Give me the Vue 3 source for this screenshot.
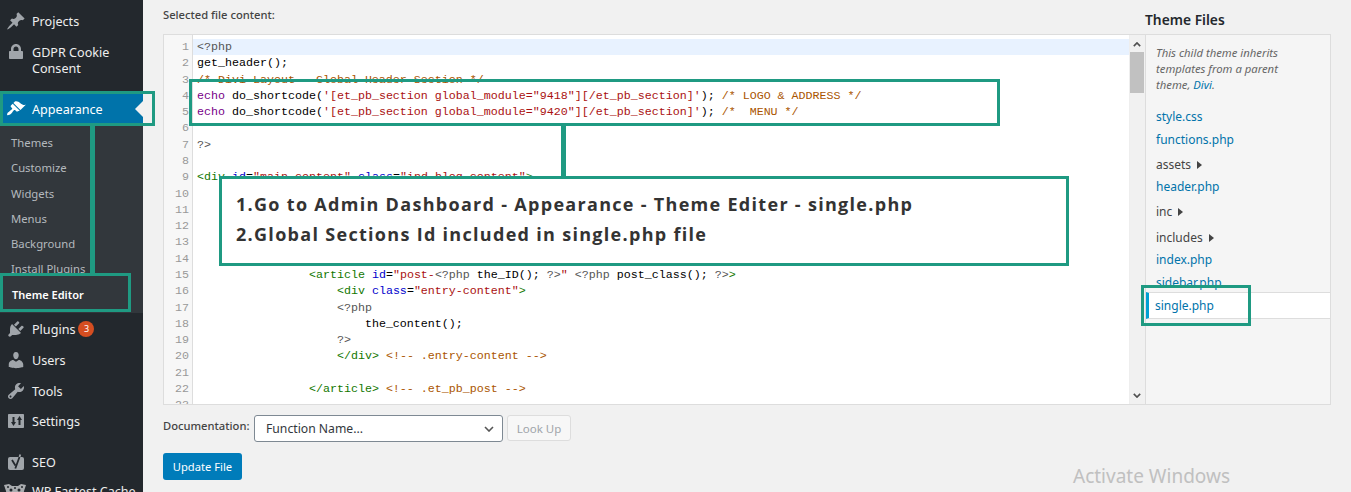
<script setup>
const icons = {
  pin: 'M10.44 3.02l1.82-1.82 6.36 6.35-1.83 1.82c-1.05-.68-2.48-.57-3.41.36l-.75.75c-.92.93-1.04 2.35-.35 3.41l-1.83 1.82-2.41-2.41-2.8 2.79c-.42.42-3.38 2.71-3.8 2.29s1.86-3.39 2.28-3.81l2.79-2.79L4.1 9.36l1.83-1.82c1.05.69 2.48.57 3.4-.36l.75-.75c.93-.92 1.05-2.35.36-3.41z',
  lock: 'M15 9h1c.55 0 1 .45 1 1v6c0 .55-.45 1-1 1H4c-.55 0-1-.45-1-1v-6c0-.55.45-1 1-1h1V7c0-2.76 2.24-5 5-5s5 2.24 5 5v2zm-2.5 0V7c0-1.38-1.12-2.5-2.5-2.5S7.500 5.620 7.500 7v2h5z',
  brush: 'M14.48 11.06L7.41 3.99l1.5-1.5c.5-.56 2.3-.47 3.51.32 1.21.8 1.43 1.28 2.91 2.1 1.18.64 2.45 1.26 4.45.85zm-.71.71L6.7 4.7 4.93 6.47c-.39.39-.39 1.02 0 1.41l1.06 1.06c.39.39.39 1.03 0 1.42-.6.6-1.43 1.11-2.21 1.69-.35.26-.7.53-1.01.84C1.43 13.23.69 15.44 1.24 16s2.77-.19 4.08-1.5c.31-.31.58-.66.84-1.01.58-.78 1.09-1.61 1.69-2.21.39-.39 1.02-.39 1.41 0l1.06 1.06c.39.39 1.02.39 1.41 0z',
  plug: 'M13.11 4.36L9.87 7.6 8 5.73l3.24-3.24c.35-.34 1.05-.2 1.56.32.52.51.66 1.21.31 1.55zm-8 1.77l.91-1.12 9.01 9.01-1.19.84c-.71.71-2.63 1.16-3.82 1.16H6.14L4.9 17.26c-.59.59-1.54.59-2.12 0-.59-.58-.59-1.53 0-2.12l1.24-1.24v-3.88c0-1.13.4-3.19 1.09-3.89zm7.26 3.97l3.24-3.24c.34-.35 1.04-.21 1.55.31.52.51.66 1.21.31 1.55l-3.24 3.25z',
  user: 'M10 9.25c-2.27 0-2.73-3.44-2.73-3.44C7 4.02 7.82 2 9.97 2c2.16 0 2.98 2.02 2.71 3.81 0 0-.41 3.44-2.68 3.44zm0 2.57L12.72 10c2.39 0 4.52 2.33 4.52 4.53v2.49s-3.65 1.13-7.24 1.13c-3.65 0-7.24-1.13-7.24-1.13v-2.49c0-2.25 1.94-4.48 4.47-4.48z',
  tools: 'M16.68 9.77c-1.34 1.34-3.3 1.67-4.95.99l-5.41 6.52c-.99.99-2.59.99-3.58 0s-.99-2.59 0-3.57l6.52-5.42c-.68-1.65-.35-3.61.99-4.95 1.28-1.28 3.12-1.62 4.72-1.06l-2.89 2.89 2.82 2.82 2.86-2.87c.53 1.58.18 3.39-1.08 4.65zM3.81 16.21c.4.39 1.04.39 1.43 0 .4-.4.4-1.04 0-1.43-.39-.4-1.03-.4-1.43 0-.39.39-.39 1.03 0 1.43z',
  settings: 'M3 3h14c.6 0 1 .4 1 1v12c0 .6-.4 1-1 1H3c-.6 0-1-.4-1-1V4c0-.6.4-1 1-1zM6.500 6v5H5l2.500 4L10 11H8.500V6zM12.500 14V9H11l2.500-4L16 9h-1.500v5z'
}

const subItems = ['Themes', 'Customize', 'Widgets', 'Menus', 'Background', 'Install Plugins']

const S = (t, c) => ({ t, c })
const sp = n => S(' '.repeat(n), '')
const code = [
  [S('<?php', 'meta')],
  [S('get_header();', '')],
  [S('/* Divi Layout - Global Header Section */', 'com')],
  [S('echo', 'kw'), S(' do_shortcode(', ''), S(`'[et_pb_section global_module="9418"][/et_pb_section]'`, 'str'), S('); ', ''), S('/* LOGO & ADDRESS */', 'com')],
  [S('echo', 'kw'), S(' do_shortcode(', ''), S(`'[et_pb_section global_module="9420"][/et_pb_section]'`, 'str'), S('); ', ''), S('/*  MENU */', 'com')],
  [],
  [S('?>', 'meta')],
  [],
  [S('<div', 'tag'), S(' '), S('id', 'attr'), S('='), S('"main-content"', 'str'), S(' '), S('class', 'attr'), S('='), S('"ind-blog-content"', 'str'), S('>', 'tag')],
  [],
  [],
  [],
  [],
  [],
  [sp(16), S('<article', 'tag'), S(' '), S('id', 'attr'), S('='), S('"post-', 'str'), S('<?php', 'meta'), S(' the_ID(); '), S('?>', 'meta'), S('"', 'str'), S(' '), S('<?php', 'meta'), S(' post_class(); '), S('?>', 'meta'), S('>', 'tag')],
  [sp(20), S('<div', 'tag'), S(' '), S('class', 'attr'), S('='), S('"entry-content"', 'str'), S('>', 'tag')],
  [sp(20), S('<?php', 'meta')],
  [sp(24), S('the_content();')],
  [sp(20), S('?>', 'meta')],
  [sp(20), S('</div>', 'tag'), S(' '), S('<!-- .entry-content -->', 'com')],
  [],
  [sp(16), S('</article>', 'tag'), S(' '), S('<!-- .et_pb_post -->', 'com')],
  []
]
</script>

<template>
  <div class="page">
    <aside class="sidebar">
      <a class="item first"><svg class="ico" viewBox="0 0 20 20"><path :d="icons.pin" /></svg><span>Projects</span></a>
      <a class="item tall"><svg class="ico" viewBox="0 0 20 20"><path :d="icons.lock" /></svg><span>GDPR Cookie<br />Consent</span></a>
      <a class="item active"><svg class="ico" viewBox="0 0 20 20"><path :d="icons.brush" /></svg><span>Appearance</span><i class="notch"></i></a>
      <div class="submenu">
        <a v-for="s in subItems" :key="s" class="sub">{{ s }}</a>
        <a class="sub current">Theme Editor</a>
      </div>
      <a class="item"><svg class="ico" viewBox="0 0 20 20"><path :d="icons.plug" /></svg><span>Plugins</span><b class="badge">3</b></a>
      <a class="item"><svg class="ico" viewBox="0 0 20 20"><path :d="icons.user" /></svg><span>Users</span></a>
      <a class="item"><svg class="ico" viewBox="0 0 20 20"><path :d="icons.tools" /></svg><span>Tools</span></a>
      <a class="item settings"><svg class="ico" viewBox="0 0 20 20"><path fill-rule="evenodd" :d="icons.settings" /></svg><span>Settings</span></a>
      <a class="item seo">
        <svg class="ico" viewBox="0 0 20 20">
          <rect x="2" y="5" width="16" height="13" rx="2" />
          <path class="y-arm" d="M14.300 2.500l-.8 2.500" />
          <path class="y-glyph" d="M6 8l3.400 5.500M13.500 5l-4.200 11.500" />
        </svg>
        <span>SEO</span>
      </a>
      <a class="item fastest">
        <svg class="cheetah" viewBox="0 0 24 24">
          <path d="M1 3l5-1 3 2h6l3-2 5 1-2 6-1 6-4 6H8l-4-6-1-6z" />
          <circle class="spot" cx="8" cy="8" r="1.500" />
          <circle class="spot" cx="16" cy="8" r="1.500" />
          <circle class="spot" cx="12" cy="6" r="1" />
          <circle class="spot" cx="5" cy="5" r="1" />
          <circle class="spot" cx="19" cy="5" r="1" />
        </svg>
        <span>WP Fastest Cache</span>
      </a>
    </aside>

    <main class="main">
      <div class="columns">
        <section class="editor-col">
          <div class="label">Selected file content:</div>
          <div class="editor">
            <div class="gutter">
              <div v-for="(l, i) in code" :key="i" class="num">{{ i + 1 }}</div>
            </div>
            <div class="code">
              <div v-for="(l, i) in code" :key="i" class="line" :class="{ hl: i === 0 }"><span v-for="(p, j) in l" :key="j" :class="p.c">{{ p.t }}</span></div>
            </div>
            <div class="scroll">
              <svg class="chev" viewBox="0 0 10 6"><path d="M1 5l4-4 4 4" /></svg>
              <div class="thumb"></div>
              <svg class="chev down" viewBox="0 0 10 6"><path d="M1 1l4 4 4-4" /></svg>
            </div>
          </div>
          <div class="doc">
            <span class="doc-label">Documentation:</span>
            <div class="select">
              <span>Function Name...</span>
              <svg viewBox="0 0 10 6"><path d="M1 1l4 4 4-4" /></svg>
            </div>
            <button class="lookup" disabled>Look Up</button>
          </div>
          <button class="update">Update File</button>
        </section>

        <section class="files-col">
          <h2 class="files-title">Theme Files</h2>
          <div class="panel">
            <p class="note">This child theme inherits<br />templates from a parent<br />theme, <a>Divi</a>.</p>
            <ul class="tree">
              <li class="file">style.css</li>
              <li class="file">functions.php</li>
              <li class="folder">assets <i class="tri"></i></li>
              <li class="file">header.php</li>
              <li class="folder">inc <i class="tri"></i></li>
              <li class="folder lower">includes <i class="tri"></i></li>
              <li class="file">index.php</li>
              <li class="file">sidebar.php</li>
              <li class="file selected">single.php</li>
            </ul>
          </div>
        </section>
      </div>
    </main>

    <div class="ann a-code"></div>
    <div class="ann a-link1"></div>
    <div class="ann a-steps">
      <div>1.Go to Admin Dashboard - Appearance - Theme Editer - single.php</div>
      <div>2.Global Sections Id included in single.php file</div>
    </div>
    <div class="ann a-appearance"></div>
    <div class="ann a-link2"></div>
    <div class="ann a-editor"></div>
    <div class="ann a-single"></div>
    <div class="watermark">Activate Windows</div>
  </div>
</template>

<style>
html, body { margin: 0; padding: 0; background: #f1f1f1; }
</style>

<style scoped>
.page {
  position: relative;
  display: flex;
  width: 1351px;
  height: 492px;
  overflow: hidden;
  background: #f1f1f1;
  font-family: "Noto Sans", "Open Sans", sans-serif;
  color: #444;
}
.sidebar {
  width: 143px;
  flex: none;
  background: #23282d;
  display: flex;
  flex-direction: column;
  color: #eee;
  font-size: 12.600px;
}
.item {
  display: flex;
  align-items: center;
  height: 31px;
  flex: none;
  box-sizing: border-box;
  padding-left: 6px;
  line-height: 16px;
  position: relative;
  color: #eee;
}
.item span { padding-top: 2px; }
.item.first { margin-top: 6px; height: 30px; }
.item.tall { height: 46px; align-items: flex-start; padding-top: 7px; margin-top: 1px; margin-bottom: 11px; }
.item.tall span { padding-top: 1px; }
.item.active { background: #0073aa; color: #fff; padding-bottom: 2px; }
.item.settings { margin-top: -1px; }
.item.seo { margin-top: 10px; }
.ico { width: 20px; height: 20px; flex: none; margin-right: 6px; fill: #a0a5aa; }
.tall .ico { margin-top: -2px; }
.active .ico { fill: #fff; }
.y-arm { fill: none; stroke: #a0a5aa; stroke-width: 1.800; }
.y-glyph { fill: none; stroke: #23282d; stroke-width: 1.800; }
.fastest { align-items: flex-start; padding-left: 3px; padding-top: 5px; }
.cheetah { width: 24px; height: 24px; flex: none; margin-right: 5px; fill: #a9acaf; }
.cheetah .spot { fill: #23282d; }
.notch {
  position: absolute;
  right: 0;
  top: 7px;
  border: 8px solid transparent;
  border-right-color: #f1f1f1;
  border-left-width: 0;
}
.badge {
  width: 16px;
  height: 16px;
  border-radius: 50%;
  background: #d54e21;
  color: #fff;
  font-size: 9px;
  font-weight: 400;
  line-height: 16px;
  text-align: center;
  margin-left: 3px;
}
.submenu {
  background: #32373c;
  padding: 5px 0 5px;
  height: 188px;
  box-sizing: border-box;
  flex: none;
}
.sub {
  display: block;
  height: 25.300px;
  line-height: 25.300px;
  padding-left: 11px;
  font-size: 11.300px;
  color: #b4b9be;
}
.sub.current { color: #fff; font-weight: 600; padding-left: 12px; font-size: 11px; }

.main { flex: 1; min-width: 0; padding-left: 20px; }
.columns { display: flex; }
.editor-col { width: 982px; flex: none; }
.label {
  height: 34px;
  padding-top: 7px;
  box-sizing: border-box;
  font-size: 11.200px;
  line-height: 16px;
  font-weight: 500;
}
.editor {
  display: flex;
  height: 371px;
  box-sizing: border-box;
  background: #fff;
  border: 1px solid #ddd;
  border-right: 0;
  overflow: hidden;
}
.gutter {
  width: 29px;
  flex: none;
  padding-top: 4px;
  box-sizing: border-box;
  background: #f7f7f7;
  border-right: 1px solid #ddd;
  text-align: right;
}
.num, .line {
  font-family: "Liberation Mono", monospace;
  font-size: 11.667px;
  line-height: 16.290px;
  height: 16.290px;
  white-space: pre;
}
.num { padding-right: 3px; color: #999; }
.code { flex: 1; min-width: 0; padding-top: 4px; overflow: hidden; color: #000; }
.line { padding-left: 4px; }
.line.hl { background: #e8f2ff; }
.meta { color: #555; }
.com { color: #a50; }
.kw { color: #708; }
.str { color: #a11; }
.tag { color: #170; }
.attr { color: #00c; }
.scroll {
  position: relative;
  width: 16px;
  flex: none;
  background: #f1f1f1;
  border-left: 1px solid #eee;
  box-sizing: border-box;
}
.chev {
  position: absolute;
  left: 3px;
  top: 7px;
  width: 8px;
  height: 5px;
  fill: none;
  stroke: #505050;
  stroke-width: 2;
}
.chev.down { top: auto; bottom: 6px; }
.thumb {
  position: absolute;
  top: 17px;
  left: 0;
  right: 1px;
  height: 41px;
  background: #c1c1c1;
}
.doc {
  display: flex;
  align-items: flex-start;
  margin-top: 10px;
  height: 27px;
}
.doc-label { width: 91px; font-size: 11.200px; line-height: 22px; font-weight: 500; flex: none; }
.select {
  width: 249px;
  height: 27px;
  box-sizing: border-box;
  background: #fff;
  border: 1px solid #7e8993;
  border-radius: 3px;
  padding: 0 4px 0 11px;
  display: flex;
  align-items: center;
  justify-content: space-between;
  font-size: 12.200px;
  color: #32373c;
}
.select svg {
  width: 10px;
  height: 6px;
  margin-right: 4px;
  fill: none;
  stroke: #555;
  stroke-width: 1.600;
}
.lookup {
  width: 64px;
  height: 26px;
  margin-left: 4px;
  padding: 0;
  border: 1px solid #ddd;
  border-radius: 3px;
  background: #f7f7f7;
  color: #a0a5aa;
  font: inherit;
  font-size: 11.500px;
}
.update {
  display: block;
  margin-top: 11px;
  width: 79px;
  height: 27px;
  padding: 0;
  border: 0;
  border-radius: 3px;
  background: #007cba;
  color: #fff;
  font: inherit;
  font-size: 11.200px;
}
.files-col { width: 186px; flex: none; }
.files-title {
  margin: 0;
  height: 34px;
  padding-top: 10px;
  box-sizing: border-box;
  font-size: 13.800px;
  line-height: 20px;
  font-weight: 600;
  color: #23282d;
}
.panel {
  height: 371px;
  box-sizing: border-box;
  background: #f5f5f5;
  border: 1px solid #ddd;
}
.note {
  margin: 0;
  padding: 10px 10px 0;
  font-size: 11.300px;
  font-style: italic;
  line-height: 16px;
  color: #666;
}
.note a { color: #0073aa; }
.tree {
  list-style: none;
  margin: 12px 0 0;
  padding: 0;
  font-size: 12px;
}
.tree li { padding-left: 10px; height: 23px; line-height: 23px; box-sizing: border-box; }
.tree .file { color: #0073aa; }
.tree .folder { height: 24px; padding-top: 2px; color: #444; }
.tree .folder.lower { height: 26px; padding-top: 4px; }
.tri {
  display: inline-block;
  margin-left: 3px;
  border: 4px solid transparent;
  border-left: 5px solid #444;
  border-right: 0;
}
.tree .selected {
  height: 27px;
  line-height: 25px;
  margin-top: -2px;
  padding-left: 6px;
  background: #fff;
  border-left: 3px solid #00a0d2;
  border-top: 1px solid #ddd;
  border-bottom: 1px solid #ddd;
}

.ann { position: absolute; box-sizing: border-box; border: 3px solid #1f9a82; }
.a-code { left: 189px; top: 79px; width: 811px; height: 47px; }
.a-link1 { left: 561px; top: 126px; width: 5px; height: 52px; border: 0; background: #1f9a82; }
.a-steps {
  left: 219px;
  top: 176px;
  width: 850px;
  height: 90px;
  background: #fff;
  padding: 10px 0 0 14px;
  font-family: "Open Sans", sans-serif;
  font-weight: 700;
  font-size: 18px;
  letter-spacing: 1.300px;
  line-height: 30px;
  color: #333;
}
.a-appearance { left: 0; top: 91px; width: 155px; height: 35px; }
.a-link2 { left: 90px; top: 126px; width: 5px; height: 150px; border: 0; background: #1f9a82; }
.a-editor { left: 0; top: 273px; width: 131px; height: 39px; }
.a-single { left: 1141px; top: 285px; width: 110px; height: 41px; }
.watermark {
  position: absolute;
  left: 1073px;
  top: 463px;
  font-size: 19px;
  line-height: 26px;
  color: #c0c0c0;
}
</style>
